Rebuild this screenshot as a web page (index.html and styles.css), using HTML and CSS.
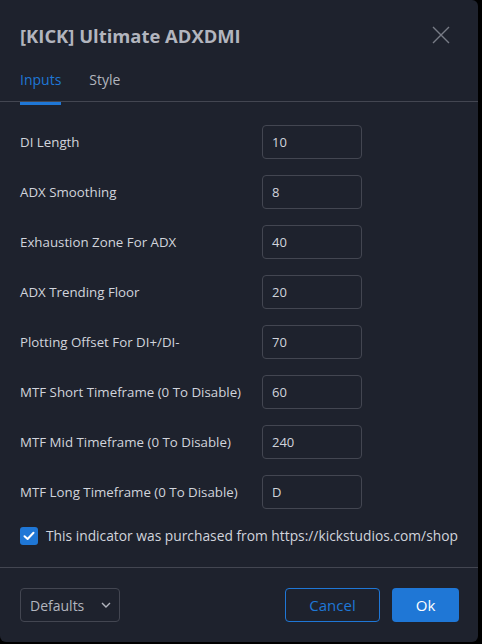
FILE: index.html
```html
<!DOCTYPE html>
<html>
<head>
<meta charset="utf-8">
<link rel="stylesheet" href="styles.css">
</head>
<body>
<div class="dialog">
  <div class="header">
    <div class="title">[KICK] Ultimate ADXDMI</div>
    <svg class="close" width="18" height="18" viewBox="0 0 18 18"><path d="M1 1L17 17M17 1L1 17" stroke="#787b86" stroke-width="1.4" fill="none"/></svg>
  </div>
  <div class="tabs">
    <div class="tab active">Inputs</div>
    <div class="tab">Style</div>
  </div>
  <div class="content">
    <div class="row"><div class="label">DI Length</div><div class="input">10</div></div>
    <div class="row"><div class="label">ADX Smoothing</div><div class="input">8</div></div>
    <div class="row"><div class="label">Exhaustion Zone For ADX</div><div class="input">40</div></div>
    <div class="row"><div class="label">ADX Trending Floor</div><div class="input">20</div></div>
    <div class="row"><div class="label">Plotting Offset For DI+/DI-</div><div class="input">70</div></div>
    <div class="row"><div class="label">MTF Short Timeframe (0 To Disable)</div><div class="input">60</div></div>
    <div class="row"><div class="label">MTF Mid Timeframe (0 To Disable)</div><div class="input">240</div></div>
    <div class="row"><div class="label">MTF Long Timeframe (0 To Disable)</div><div class="input">D</div></div>
    <div class="check-row">
      <span class="checkbox"><svg width="12" height="10" viewBox="0 0 12 10"><path d="M1.5 5.2L4.6 8L10.5 1.8" stroke="#fff" stroke-width="2" fill="none" stroke-linecap="round" stroke-linejoin="round"/></svg></span>
      <span class="check-label">This indicator was purchased from https://kickstudios.com/shop</span>
    </div>
  </div>
  <div class="footer">
    <div class="select"><span>Defaults</span><svg width="10" height="6" viewBox="0 0 10 6"><path d="M1 1L5 5L9 1" stroke="#b2b5be" stroke-width="1.4" fill="none"/></svg></div>
    <div class="buttons">
      <div class="btn cancel">Cancel</div>
      <div class="btn ok">Ok</div>
    </div>
  </div>
</div>
</body>
</html>
```
FILE: styles.css
```css
html, body {
  margin: 0;
  padding: 0;
  background: #000;
}
body {
  font-family: "Open Sans", "Noto Sans", sans-serif;
  color: #d1d4dc;
}
.dialog {
  width: 478px;
  height: 642px;
  background: #1e222d;
  border-radius: 0 6px 6px 6px;
  display: flex;
  flex-direction: column;
  box-sizing: border-box;
}
.header {
  height: 70px;
  display: flex;
  align-items: center;
  justify-content: space-between;
  padding: 0 28px 0 20px;
}
.title {
  font-size: 18.4px;
  font-weight: 700;
  color: #b2b5be;
}
.close {
  display: block;
}
.tabs {
  height: 31px;
  display: flex;
  gap: 28px;
  padding: 0 20px;
  border-bottom: 1px solid #434651;
}
.tab {
  position: relative;
  font-size: 14px;
  line-height: 20px;
  color: #b2b5be;
}
.tab.active {
  color: #1f77d6;
}
.tab.active::after {
  content: "";
  position: absolute;
  left: 0;
  right: 0;
  bottom: -4px;
  height: 3px;
  background: #1f77d6;
}
.content {
  flex: 1;
  padding: 23px 20px 0;
  display: flex;
  flex-direction: column;
  gap: 16px;
  border-bottom: 1px solid #434651;
}
.row {
  display: grid;
  grid-template-columns: 242px 100px;
  align-items: center;
  height: 34px;
}
.label {
  font-size: 13.3px;
  color: #d1d4dc;
}
.input {
  height: 34px;
  box-sizing: border-box;
  border: 1px solid #434651;
  border-radius: 4px;
  padding: 0 9px;
  font-size: 13px;
  line-height: 32px;
  color: #d1d4dc;
}
.check-row {
  display: flex;
  align-items: center;
  gap: 8px;
  margin-top: 1px;
}
.checkbox {
  width: 18px;
  height: 18px;
  border-radius: 3px;
  background: #1f77d6;
  display: flex;
  align-items: center;
  justify-content: center;
}
.check-label {
  font-size: 13.8px;
  color: #d1d4dc;
}
.footer {
  height: 74px;
  display: flex;
  align-items: center;
  justify-content: space-between;
  padding: 0 19px 0 20px;
  box-sizing: border-box;
}
.select {
  width: 100px;
  height: 34px;
  box-sizing: border-box;
  border: 1px solid #434651;
  border-radius: 4px;
  display: flex;
  align-items: center;
  justify-content: space-between;
  padding: 0 8px 0 9px;
  font-size: 14px;
  color: #b2b5be;
}
.buttons {
  display: flex;
  gap: 12px;
}
.btn {
  height: 34px;
  box-sizing: border-box;
  border-radius: 4px;
  display: flex;
  align-items: center;
  justify-content: center;
  font-size: 15px;
}
.cancel {
  width: 95px;
  border: 1px solid #1f77d6;
  color: #1f77d6;
}
.ok {
  width: 67px;
  background: #1f77d6;
  color: #fff;
}
```
